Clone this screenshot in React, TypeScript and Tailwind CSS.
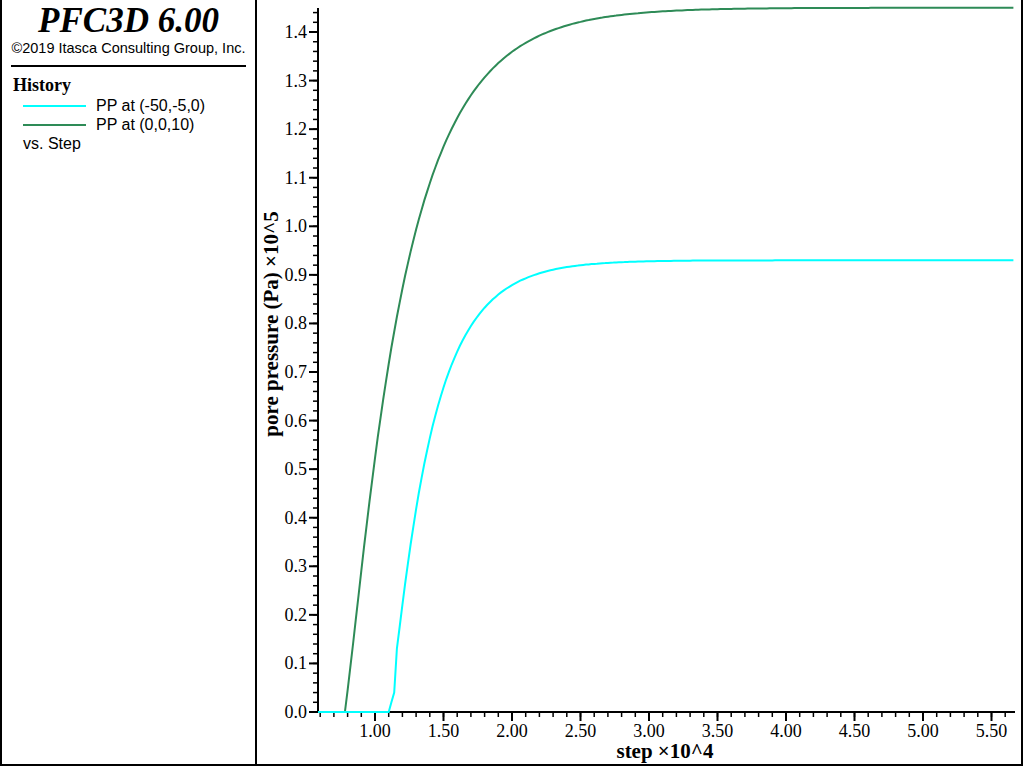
import React from "react";

const X0 = 318, X1 = 1015, Y0 = 712;
const px = (x: number) => 375 + (x - 1) * 137;
const py = (y: number) => Y0 - y * 485.7;

function curve(start: number, amp: number, tau: number, jump?: number) {
  const pts: string[] = [];
  pts.push(`${X0},${Y0}`);
  pts.push(`${px(start)},${Y0}`);
  for (let x = start; x <= 5.67; x += 0.02) {
    const t = x - start;
    let y = amp * (1 - Math.exp(-t / tau)) * (1 - Math.exp(-t / (tau * 0.35)) * 0.35);
    if (jump && x < start + 0.05) y = (t / 0.05) * 0.05;
    pts.push(`${px(x).toFixed(1)},${py(y).toFixed(1)}`);
  }
  return pts.join(" ");
}

export default function App() {
  const yTicks = Array.from({ length: 15 }, (_, i) => i / 10);
  const yMinor = Array.from({ length: 73 }, (_, i) => i * 0.02);
  const xLabels = Array.from({ length: 10 }, (_, i) => 1 + i * 0.5);
  const xMinor: number[] = [];
  for (let x = 0.6; x <= 5.65; x += 0.1) xMinor.push(x);
  return (
    <div className="w-[1024px] h-[768px] bg-white flex overflow-hidden">
      <div className="w-[257px] h-[766px] border-l-2 border-b-2 border-r-2 border-black flex flex-col items-center shrink-0">
        <div className="mt-[1px] text-[35px] leading-[40px] font-bold italic" style={{ fontFamily: '"Liberation Serif", serif' }}>PFC3D 6.00</div>
        <div className="text-[14.5px] leading-[16px] -mt-[1px]" style={{ fontFamily: '"Liberation Sans", sans-serif' }}>©2019 Itasca Consulting Group, Inc.</div>
        <div className="w-[235px] h-[2px] bg-black mt-[9px]" />
        <div className="self-start pl-[11px] mt-[8px] text-[18px] leading-[21px] font-bold" style={{ fontFamily: '"Liberation Serif", serif' }}>History</div>
        <div className="self-start pl-[21px] text-[16px] leading-[19px]" style={{ fontFamily: '"Liberation Sans", sans-serif' }}>
          <div className="flex items-center gap-[10px]"><div className="w-[63px] h-[2px] bg-[#00ffff]" />PP at (-50,-5,0)</div>
          <div className="flex items-center gap-[10px]"><div className="w-[63px] h-[2px] bg-[#2e8b57]" />PP at (0,0,10)</div>
          <div>vs. Step</div>
        </div>
      </div>
      <svg width="767" height="768" viewBox="257 0 767 768" className="shrink-0" style={{ fontFamily: '"Liberation Serif", serif' }}>
        <line x1="1022" y1="0" x2="1022" y2="766" stroke="black" strokeWidth="2" />
        <line x1="257" y1="765" x2="1023" y2="765" stroke="black" strokeWidth="2" />
        <line x1={X0} y1="8" x2={X0} y2={Y0} stroke="black" strokeWidth="2" />
        <line x1={X0} y1={Y0} x2={X1} y2={Y0} stroke="black" strokeWidth="2" />
        {yMinor.map((v) => <line key={"ym" + v} x1={X0 - 5} y1={py(v)} x2={X0} y2={py(v)} stroke="black" strokeWidth="1.5" />)}
        {yTicks.map((v) => (
          <g key={"y" + v}>
            <line x1={X0 - 9} y1={py(v)} x2={X0} y2={py(v)} stroke="black" strokeWidth="2" />
            <text x={X0 - 11} y={py(v) + 6} textAnchor="end" fontSize="18">{v.toFixed(1)}</text>
          </g>
        ))}
        {xMinor.map((v) => <line key={"xm" + v} x1={px(v)} y1={Y0} x2={px(v)} y2={Y0 + 5} stroke="black" strokeWidth="1.5" />)}
        {xLabels.map((v) => (
          <g key={"x" + v}>
            <line x1={px(v)} y1={Y0} x2={px(v)} y2={Y0 + 9} stroke="black" strokeWidth="2" />
            <text x={px(v)} y={Y0 + 25} textAnchor="middle" fontSize="18">{v.toFixed(2)}</text>
          </g>
        ))}
        <polyline points={curve(0.78, 1.45, 0.44)} fill="none" stroke="#2e8b57" strokeWidth="2" />
        <polyline points={curve(1.1, 0.93, 0.31, 1)} fill="none" stroke="#00ffff" strokeWidth="2" />
        <text x="665" y="758" textAnchor="middle" fontSize="21" fontWeight="bold">step ×10^4</text>
        <text transform="translate(278 324) rotate(-90)" textAnchor="middle" fontSize="21" fontWeight="bold">pore pressure (Pa) ×10^5</text>
      </svg>
    </div>
  );
}
